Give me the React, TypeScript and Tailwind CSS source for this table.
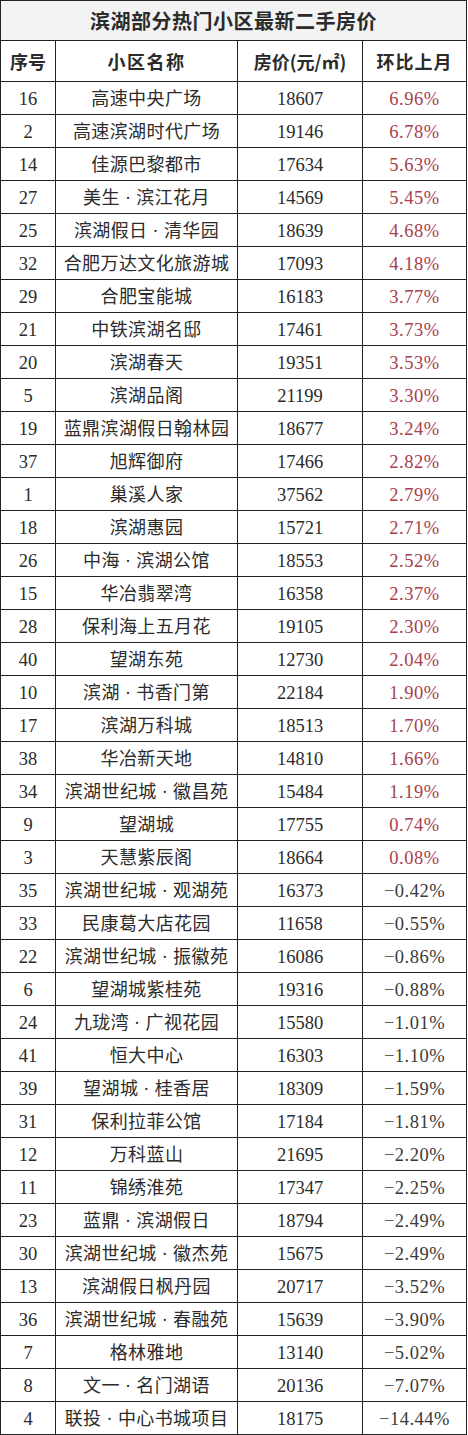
const rows: [string, string, string, string][] = [
  ['16', '高速中央广场', '18607', '6.96%'],
  ['2', '高速滨湖时代广场', '19146', '6.78%'],
  ['14', '佳源巴黎都市', '17634', '5.63%'],
  ['27', '美生·滨江花月', '14569', '5.45%'],
  ['25', '滨湖假日·清华园', '18639', '4.68%'],
  ['32', '合肥万达文化旅游城', '17093', '4.18%'],
  ['29', '合肥宝能城', '16183', '3.77%'],
  ['21', '中铁滨湖名邸', '17461', '3.73%'],
  ['20', '滨湖春天', '19351', '3.53%'],
  ['5', '滨湖品阁', '21199', '3.30%'],
  ['19', '蓝鼎滨湖假日翰林园', '18677', '3.24%'],
  ['37', '旭辉御府', '17466', '2.82%'],
  ['1', '巢溪人家', '37562', '2.79%'],
  ['18', '滨湖惠园', '15721', '2.71%'],
  ['26', '中海·滨湖公馆', '18553', '2.52%'],
  ['15', '华冶翡翠湾', '16358', '2.37%'],
  ['28', '保利海上五月花', '19105', '2.30%'],
  ['40', '望湖东苑', '12730', '2.04%'],
  ['10', '滨湖·书香门第', '22184', '1.90%'],
  ['17', '滨湖万科城', '18513', '1.70%'],
  ['38', '华冶新天地', '14810', '1.66%'],
  ['34', '滨湖世纪城·徽昌苑', '15484', '1.19%'],
  ['9', '望湖城', '17755', '0.74%'],
  ['3', '天慧紫辰阁', '18664', '0.08%'],
  ['35', '滨湖世纪城·观湖苑', '16373', '-0.42%'],
  ['33', '民康葛大店花园', '11658', '-0.55%'],
  ['22', '滨湖世纪城·振徽苑', '16086', '-0.86%'],
  ['6', '望湖城紫桂苑', '19316', '-0.88%'],
  ['24', '九珑湾·广视花园', '15580', '-1.01%'],
  ['41', '恒大中心', '16303', '-1.10%'],
  ['39', '望湖城·桂香居', '18309', '-1.59%'],
  ['31', '保利拉菲公馆', '17184', '-1.81%'],
  ['12', '万科蓝山', '21695', '-2.20%'],
  ['11', '锦绣淮苑', '17347', '-2.25%'],
  ['23', '蓝鼎·滨湖假日', '18794', '-2.49%'],
  ['30', '滨湖世纪城·徽杰苑', '15675', '-2.49%'],
  ['13', '滨湖假日枫丹园', '20717', '-3.52%'],
  ['36', '滨湖世纪城·春融苑', '15639', '-3.90%'],
  ['7', '格林雅地', '13140', '-5.02%'],
  ['8', '文一·名门湖语', '20136', '-7.07%'],
  ['4', '联投·中心书城项目', '18175', '-14.44%'],
];

const serif = "font-['Liberation_Serif','Noto_Sans_CJK_SC',serif]";
const bold = "font-['Noto_Sans_CJK_SC',sans-serif] font-bold";
const cell = 'h-[33px] border border-[#222] p-0 pt-[2px] text-center leading-none';

function Name({ text }: { text: string }) {
  const parts = text.split('·');
  return (
    <>
      {parts.map((p, i) => (
        <span key={i}>
          {i > 0 && <span className="px-[5px]">·</span>}
          {p}
        </span>
      ))}
    </>
  );
}

export default function App() {
  return (
    <div className="w-[468px] bg-white">
      <table className="w-[466px] table-fixed border-collapse text-[#2b2b2b]">
        <colgroup>
          <col className="w-[55px]" />
          <col className="w-[182px]" />
          <col className="w-[125px]" />
          <col className="w-[104px]" />
        </colgroup>
        <thead>
          <tr>
            <th colSpan={4} className={`h-[40px] border border-[#222] bg-[#f3f3f3] p-0 text-center text-[20px] leading-none tracking-[0.5px] ${bold}`}>
              滨湖部分热门小区最新二手房价
            </th>
          </tr>
          <tr>
            <th className={`h-[41px] border border-[#222] p-0 text-center text-[18px] leading-none ${bold}`}>序号</th>
            <th className={`h-[41px] border border-[#222] p-0 text-center text-[18px] leading-none tracking-[1.5px] ${bold}`}>小区名称</th>
            <th className={`h-[41px] border border-[#222] p-0 text-center text-[18px] leading-none ${bold}`}>房价(元/㎡)</th>
            <th className={`h-[41px] border border-[#222] p-0 text-center text-[18px] leading-none tracking-[1px] ${bold}`}>环比上月</th>
          </tr>
        </thead>
        <tbody className={serif}>
          {rows.map(([no, name, price, pct], i) => (
            <tr key={i}>
              <td className={`${cell} text-[18.5px]`}>{no}</td>
              <td className={`${cell} text-[18px] whitespace-nowrap tracking-[0.4px]`}>
                <Name text={name} />
              </td>
              <td className={`${cell} text-[18.5px]`}>{price}</td>
              <td
                className={`${cell} text-[18.5px] tracking-[0.5px] ${
                  pct.startsWith('-') ? 'text-[#3a3a3a]' : 'text-[#a8404e]'
                }`}
              >
                {pct.replace('-', '−')}
              </td>
            </tr>
          ))}
        </tbody>
      </table>
    </div>
  );
}
